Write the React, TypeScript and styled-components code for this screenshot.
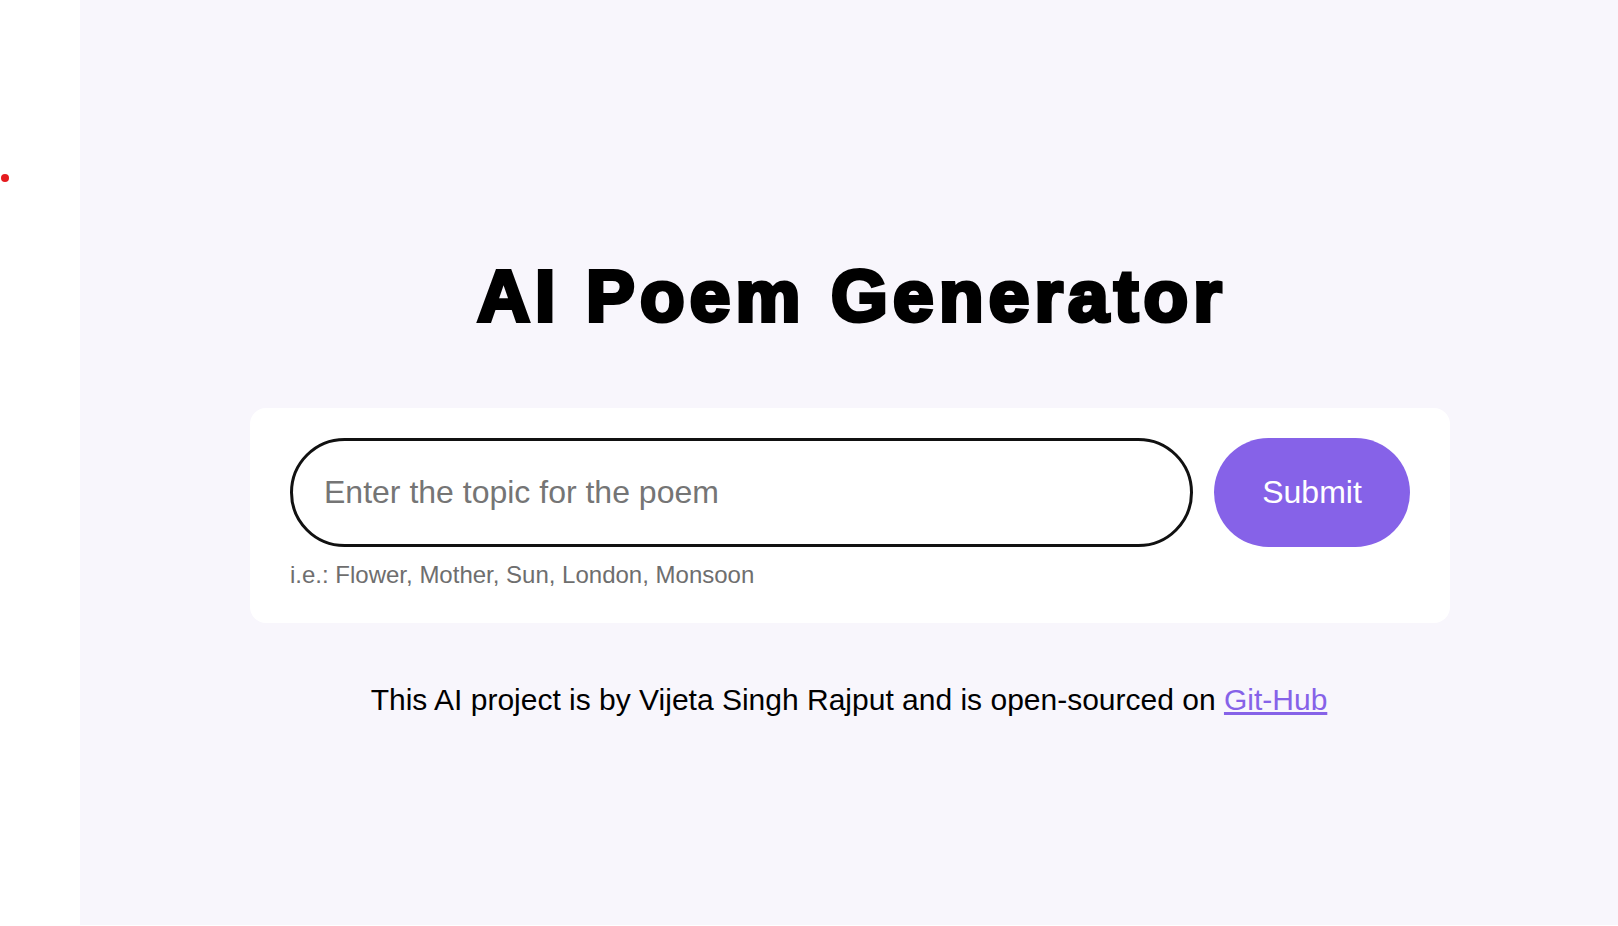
import React from "react";
import styled, { createGlobalStyle } from "styled-components";

const GlobalStyle = createGlobalStyle`
  html, body {
    margin: 0;
    padding: 0;
    background: #ffffff;
  }
  * {
    box-sizing: border-box;
  }
`;

const Page = styled.div`
  display: flex;
  flex-direction: row;
  width: 100%;
  min-height: calc(100vh - 1px);
`;

const SideStrip = styled.aside`
  width: 80px;
  flex: 0 0 80px;
  background: #ffffff;
  padding-top: 174px;
  padding-left: 1px;
`;

const RedDot = styled.span`
  display: block;
  width: 8px;
  height: 8px;
  border-radius: 50%;
  background: #e51b1f;
`;

const Main = styled.main`
  flex: 1;
  background: #f8f6fc;
  display: flex;
  flex-direction: column;
  align-items: center;
  padding-top: 254px;
  font-family: "Liberation Sans", Arial, sans-serif;
`;

const Title = styled.h1`
  margin: 0;
  font-family: "Liberation Sans", Arial, sans-serif;
  font-size: 73px;
  line-height: 84px;
  font-weight: 700;
  color: #000;
  letter-spacing: 5.2px;
  padding-left: 6px;
  -webkit-text-stroke: 4px #000;
`;

const Card = styled.section`
  margin-top: 70px;
  margin-left: 2px;
  width: 1200px;
  background: #ffffff;
  border-radius: 16px;
  padding: 30px 40px 34px;
`;

const FormRow = styled.form`
  display: flex;
  gap: 21px;
  height: 109px;
`;

const TopicInput = styled.input`
  flex: 1;
  height: 100%;
  border: 3px solid #111111;
  border-radius: 56px;
  padding: 0 31px;
  font-family: "Liberation Sans", Arial, sans-serif;
  font-size: 32px;
  color: #222;
  background: #ffffff;
  outline: none;
  &::placeholder {
    color: #757575;
  }
`;

const SubmitButton = styled.button`
  width: 196px;
  height: 100%;
  border: none;
  border-radius: 56px;
  background: #8662e8;
  color: #ffffff;
  font-family: "Liberation Sans", Arial, sans-serif;
  font-size: 32px;
  cursor: pointer;
`;

const Hint = styled.p`
  margin: 14px 0 0;
  font-size: 24px;
  line-height: 28px;
  color: #6e6e6e;
`;

const Footer = styled.p`
  margin: 60px 0 0;
  font-size: 30px;
  line-height: 34px;
  color: #000;
`;

const Link = styled.a`
  color: #8662e8;
  text-decoration: underline;
`;

export default function App() {
  return (
    <>
      <GlobalStyle />
      <Page>
        <SideStrip>
          <RedDot />
        </SideStrip>
        <Main>
          <Title>AI Poem Generator</Title>
          <Card>
            <FormRow onSubmit={(e) => e.preventDefault()}>
              <TopicInput type="text" placeholder="Enter the topic for the poem" />
              <SubmitButton type="submit">Submit</SubmitButton>
            </FormRow>
            <Hint>i.e.: Flower, Mother, Sun, London, Monsoon</Hint>
          </Card>
          <Footer>
            This AI project is by Vijeta Singh Rajput and is open-sourced on{" "}
            <Link href="#">Git-Hub</Link>
          </Footer>
        </Main>
      </Page>
    </>
  );
}
